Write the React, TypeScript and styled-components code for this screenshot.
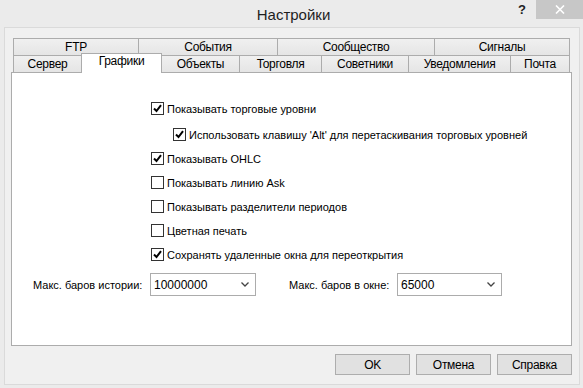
import React from "react";
import styled, { createGlobalStyle } from "styled-components";

const GlobalStyle = createGlobalStyle`
  html, body {
    margin: 0;
    padding: 0;
    background: #ebebeb;
  }
  body {
    font-family: "Liberation Sans", Arial, sans-serif;
    font-size: 11px;
    color: #000;
  }
`;

const Window = styled.div`
  width: 583px;
  height: 388px;
  background: #ebebeb;
  display: flex;
  flex-direction: column;
  box-sizing: border-box;
  overflow: hidden;
`;

const TitleBar = styled.div`
  height: 28px;
  display: flex;
  position: relative;
  align-items: flex-start;
`;

const Title = styled.div`
  flex: 1;
  text-align: center;
  font-size: 15px;
  color: #1e1e1e;
  padding-top: 6px;
  padding-left: 4px;
`;

const HelpMark = styled.div`
  position: absolute;
  right: 57px;
  top: 2px;
  font-size: 13px;
  font-weight: bold;
  color: #222;
`;

const CloseButton = styled.div`
  position: absolute;
  right: 0;
  top: 0;
  width: 47px;
  height: 19px;
  background: #c7c7c7;
  display: flex;
  align-items: center;
  justify-content: center;
`;

const Client = styled.div`
  flex: 1;
  margin: 0 3px 3px 4px;
  border: 1px solid #dadada;
  background: #f0f0f0;
  display: flex;
  flex-direction: column;
  padding: 10px 7px 9px 6px;
`;

const TabStrip = styled.div`
  display: flex;
  flex-direction: column;
  padding-left: 2px;
  position: relative;
  z-index: 1;
`;

const TabRow = styled.div`
  display: flex;
  align-items: flex-end;
  height: 17px;
`;

const Tab = styled.div<{ $w: number; $active?: boolean }>`
  box-sizing: border-box;
  width: ${(p) => p.$w}px;
  height: ${(p) => (p.$active ? 20 : 17)}px;
  margin-left: -1px;
  margin-bottom: ${(p) => (p.$active ? -1 : 0)}px;
  &:first-child {
    margin-left: 0;
  }
  border: 1px solid #acacac;
  border-bottom: none;
  background: ${(p) =>
    p.$active ? "#fff" : "linear-gradient(#f0f0f0, #e5e5e5)"};
  text-align: center;
  font-size: 12px;
  letter-spacing: -0.3px;
  line-height: ${(p) => (p.$active ? 15 : 16)}px;
  color: #000;
  position: relative;
  z-index: ${(p) => (p.$active ? 2 : 0)};
  white-space: nowrap;
`;

const Panel = styled.div`
  height: 274px;
  box-sizing: border-box;
  border: 1px solid #acacac;
  background: #fff;
  display: flex;
  flex-direction: column;
  padding-top: 29px;
`;

const Options = styled.div`
  display: flex;
  flex-direction: column;
  padding-left: 139px;
  gap: 11px;
`;

const OptionRow = styled.label<{ $indent?: boolean; $extra?: boolean }>`
  display: flex;
  align-items: center;
  height: 13px;
  padding-left: ${(p) => (p.$indent ? 22 : 0)}px;
  margin-bottom: ${(p) => (p.$extra ? 2 : 0)}px;
  white-space: nowrap;
`;

const Box = styled.span`
  box-sizing: border-box;
  width: 13px;
  height: 13px;
  border: 1px solid #333;
  background: #fff;
  margin-right: 3px;
  display: flex;
  align-items: center;
  justify-content: center;
  flex: none;
`;

const ComboLine = styled.div`
  display: flex;
  align-items: center;
  margin-top: 12px;
  padding-left: 21px;
`;

const ComboLabel = styled.div<{ $w: number }>`
  width: ${(p) => p.$w}px;
  white-space: nowrap;
`;

const Combo = styled.div<{ $w: number }>`
  box-sizing: border-box;
  width: ${(p) => p.$w}px;
  height: 23px;
  border: 1px solid #acacac;
  background: #fff;
  display: flex;
  align-items: center;
  justify-content: space-between;
  padding: 0 6px 0 3px;
  font-size: 12px;
`;

const Spacer = styled.div<{ $w: number }>`
  width: ${(p) => p.$w}px;
`;

const ButtonBar = styled.div`
  display: flex;
  justify-content: flex-end;
  gap: 6px;
  margin-top: 8px;
`;

const Button = styled.div`
  box-sizing: border-box;
  width: 75px;
  height: 21px;
  border: 1px solid #adadad;
  background: #e1e1e1;
  display: flex;
  align-items: center;
  justify-content: center;
  font-size: 12px;
  letter-spacing: -0.3px;
`;

const Check = () => (
  <svg width="9" height="9" viewBox="0 0 9 9">
    <path d="M1 4.5 L3.5 7 L8 1.2" fill="none" stroke="#000" strokeWidth="2" />
  </svg>
);

const Chevron = () => (
  <svg width="8" height="5" viewBox="0 0 8 5">
    <path d="M0.5 0.5 L4 4 L7.5 0.5" fill="none" stroke="#444" strokeWidth="1.3" />
  </svg>
);

const topTabs = [
  { t: "FTP", w: 126 },
  { t: "События", w: 140 },
  { t: "Сообщество", w: 158 },
  { t: "Сигналы", w: 136 },
];

const bottomTabs = [
  { t: "Сервер", w: 69 },
  { t: "Графики", w: 81, active: true },
  { t: "Объекты", w: 79 },
  { t: "Торговля", w: 83 },
  { t: "Советники", w: 88 },
  { t: "Уведомления", w: 103 },
  { t: "Почта", w: 60 },
];

const options = [
  { t: "Показывать торговые уровни", on: true, extra: true },
  { t: "Использовать клавишу 'Alt' для перетаскивания торговых уровней", on: true, indent: true },
  { t: "Показывать OHLC", on: true },
  { t: "Показывать линию Ask", on: false },
  { t: "Показывать разделители периодов", on: false },
  { t: "Цветная печать", on: false },
  { t: "Сохранять удаленные окна для переоткрытия", on: true },
];

export default function App() {
  return (
    <Window>
      <GlobalStyle />
      <TitleBar>
        <Title>Настройки</Title>
        <HelpMark>?</HelpMark>
        <CloseButton>
          <svg width="10" height="9" viewBox="0 0 10 9">
            <path d="M1 0.5 L9 8.5 M9 0.5 L1 8.5" stroke="#fff" strokeWidth="1.6" />
          </svg>
        </CloseButton>
      </TitleBar>
      <Client>
        <TabStrip>
          <TabRow>
            {topTabs.map((tab) => (
              <Tab key={tab.t} $w={tab.w}>
                {tab.t}
              </Tab>
            ))}
          </TabRow>
          <TabRow>
            {bottomTabs.map((tab) => (
              <Tab key={tab.t} $w={tab.w} $active={tab.active}>
                {tab.t}
              </Tab>
            ))}
          </TabRow>
        </TabStrip>
        <Panel>
          <Options>
            {options.map((o) => (
              <OptionRow key={o.t} $indent={o.indent} $extra={o.extra}>
                <Box>{o.on && <Check />}</Box>
                {o.t}
              </OptionRow>
            ))}
          </Options>
          <ComboLine>
            <ComboLabel $w={117}>Макс. баров истории:</ComboLabel>
            <Combo $w={106}>
              10000000
              <Chevron />
            </Combo>
            <Spacer $w={33} />
            <ComboLabel $w={108}>Макс. баров в окне:</ComboLabel>
            <Combo $w={105}>
              65000
              <Chevron />
            </Combo>
          </ComboLine>
        </Panel>
        <ButtonBar>
          <Button>OK</Button>
          <Button>Отмена</Button>
          <Button>Справка</Button>
        </ButtonBar>
      </Client>
    </Window>
  );
}
